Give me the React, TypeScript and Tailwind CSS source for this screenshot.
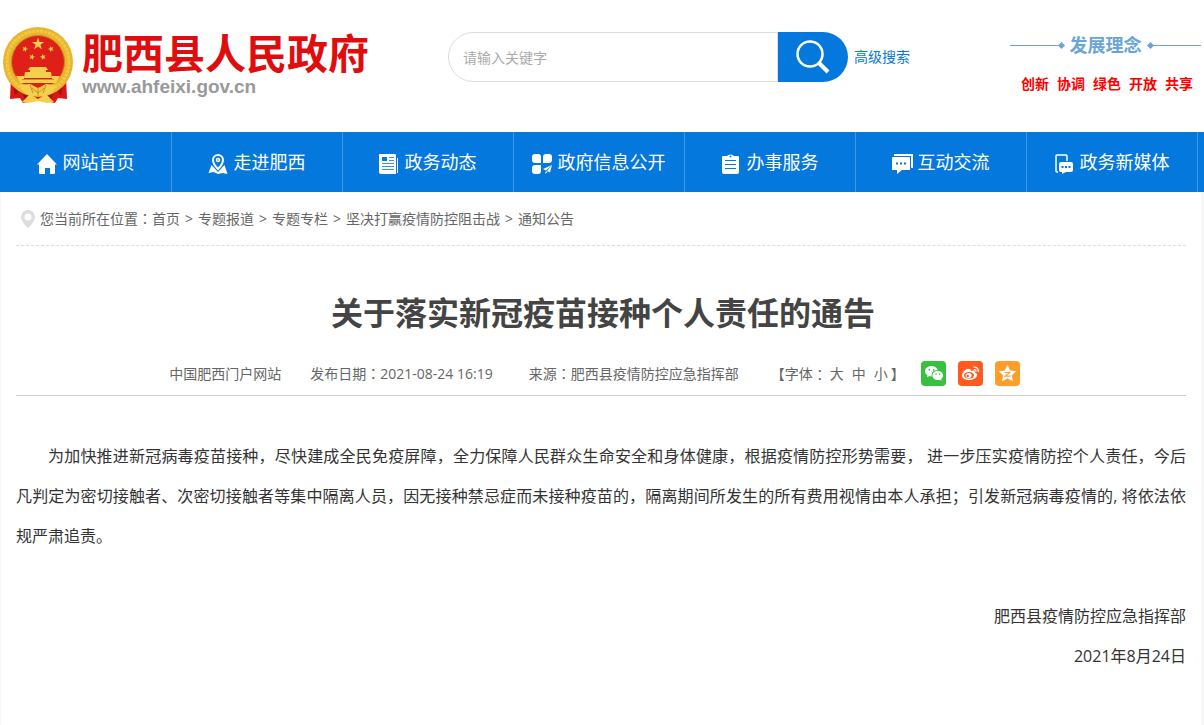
import type { ReactNode } from 'react'

const navItems: { label: string; icon: ReactNode }[] = [
  {
    label: '网站首页',
    icon: <path d="M10 0 20 10.500h-2V19a1 1 0 0 1-1 1h-4v-6H8v6H3a1 1 0 0 1-1-1v-8.500H0z" fill="currentColor" />
  },
  {
    label: '走进肥西',
    icon: (
      <>
        <path
          d="M10 1a5 5 0 0 0-5 5c0 4 5 9 5 9s5-5 5-9a5 5 0 0 0-5-5z"
          fill="none"
          stroke="currentColor"
          strokeWidth="2"
        />
        <circle cx="10" cy="6" r="1.500" fill="none" stroke="currentColor" strokeWidth="1.500" />
        <path d="M3.500 11 .5 19l5-1 4.500 2 4.500-1 5 1-3-9-6.500 7z" fill="currentColor" />
      </>
    )
  },
  {
    label: '政务动态',
    icon: (
      <>
        <path d="M1 0h15a1 1 0 0 1 1 1v19H2a2 2 0 0 1-2-2V1a1 1 0 0 1 1-1z" fill="currentColor" />
        <path d="M18 4h1v15h-1z" fill="currentColor" />
        <path d="M3 3h5v4H3z" fill="#0478dc" />
        <path d="M10 3.500h5M10 6.500h5M3 9.500h12M3 12.500h12M3 15.500h12" stroke="#0478dc" strokeWidth=".8" />
      </>
    )
  },
  {
    label: '政府信息公开',
    icon: (
      <>
        <path
          d="M3 0h3a3 3 0 0 1 3 3v6H3a3 3 0 0 1-3-3V3a3 3 0 0 1 3-3zM14 0h3a3 3 0 0 1 3 3v3a3 3 0 0 1-3 3h-6V3a3 3 0 0 1 3-3zM3 11h6v6a3 3 0 0 1-3 3H3a3 3 0 0 1-3-3v-3a3 3 0 0 1 3-3z"
          fill="currentColor"
        />
        <path d="M20 11l-9 4 3 1.500zM20 11l-5 6 3 1.500zM14 17l-1 3 2.500-2z" fill="currentColor" />
      </>
    )
  },
  {
    label: '办事服务',
    icon: (
      <>
        <path
          d="M2 2h4a4 3 0 0 1 7 0h4a1 1 0 0 1 1 1v15a2 2 0 0 1-2 2H3a2 2 0 0 1-2-2V3a1 1 0 0 1 1-1z"
          fill="currentColor"
        />
        <circle cx="9.500" cy="2.500" r="1" fill="#0478dc" />
        <path d="M4 6.500h11M4 10.500h11M4 14.500h11" stroke="#0478dc" />
      </>
    )
  },
  {
    label: '互动交流',
    icon: (
      <>
        <path d="M2 1h18v13" fill="none" stroke="currentColor" strokeWidth="2" />
        <path d="M1 3h16a1 1 0 0 1 1 1v12h-8l-5 4v-4H0V4a1 1 0 0 1 1-1z" fill="currentColor" />
        <path d="M4 8.500h2v2H4zM8 8.500h2v2H8zM12 8.500h2v2h-2z" fill="#0478dc" />
      </>
    )
  },
  {
    label: '政务新媒体',
    icon: (
      <>
        <path
          d="M4 18H3a1 1 0 0 1-1-1V2a1 1 0 0 1 1-1h9a1 1 0 0 1 1 1v5"
          fill="none"
          stroke="currentColor"
          strokeWidth="1.500"
        />
        <path
          d="M7 8h10a2 2 0 0 1 2 2v6a2 2 0 0 1-2 2h-5l-4 2v-2H7a2 2 0 0 1-2-2v-6a2 2 0 0 1 2-2z"
          fill="currentColor"
        />
        <path d="M7.500 12h2v2h-2zM11 12h2v2h-2zM14.500 12h2v2h-2z" fill="#0478dc" />
      </>
    )
  }
]

const crumbs = ['首页', '专题报道', '专题专栏', '坚决打赢疫情防控阻击战', '通知公告']

const ideas = ['创新', '协调', '绿色', '开放', '共享']

const star = 'M0-10 2.400-3.200 9.500-3.100 3.800 1.200 5.900 8.100 0 4-5.900 8.100-3.800 1.200-9.500-3.100-2.400-3.200z'

// Full-width colon set in the middle of its cell
function Colon() {
  return <span className="font-['Noto_Sans_CJK_TC',sans-serif] leading-none">：</span>
}

function Emblem() {
  return (
    <svg viewBox="0 0 72 78" className="h-[78px] w-[72px] shrink-0" aria-hidden="true">
      <path d="m9 50-1 22 10-1 3 5 10-2h12l10 2 3-5 9 1-1-22z" fill="#d81718" />
      <path d="m11 58 8 4-6 6zM61 58l-8 4 6 6zM20 63l6 6-3 6zM52 63l-6 6 3 6z" fill="#a80e12" />
      <circle cx="36" cy="35" r="35" fill="#e9b52f" />
      <circle cx="36" cy="35" r="31" fill="none" stroke="#f2c945" strokeWidth="3" strokeDasharray="3 1" />
      <circle cx="36" cy="35" r="26.500" fill="#df2019" stroke="#c58b1b" />
      <g fill="#f5ce4b">
        <path d={star} transform="translate(36 17) scale(.65)" />
        <path d={star} transform="translate(23 22) rotate(20) scale(.32)" />
        <path d={star} transform="translate(49 22) rotate(-20) scale(.32)" />
        <path d={star} transform="translate(30 30) rotate(15) scale(.32)" />
        <path d={star} transform="translate(41 30) rotate(-15) scale(.32)" />
        <path d="M28 40h16l2 3h-2v2h5l1 6H22l1-6h5v-2h-2zM14 49h8v3h28v-3h8l-4 7H18z" />
        <path d="m17 58 11-1 8 4 8-4 11 1-5 8-7 3h-14l-7-3z" />
        <path d="m20 75 8-8 8 5 8-5 8 8-7 1-9-2-9 2z" />
      </g>
      <path d="M20 52.500h32M30 61l6 5 6-5M36 61v8M28 58l3 8M44 58l-3 8" stroke="#c8921f" fill="none" />
    </svg>
  )
}

function ShareLinks() {
  return (
    <div className="flex gap-3">
      <a href="#wechat" aria-label="微信" className="block size-[25px] rounded-[4px] bg-[#38c13f]">
        <svg viewBox="0 0 25 25" className="size-full">
          <path
            d="M10.500 5C6.900 5 4 7.300 4 10.200c0 1.700 1 3.100 2.500 4.100L6 16.300l2.300-1.200c.8.200 1.500.3 2.400.3-.8-3.700 2.200-6.500 6.100-6.400C16.100 6.700 13.600 5 10.500 5z"
            fill="#fff"
          />
          <path
            d="M16.800 10c-3.100 0-5.400 2-5.400 4.500s2.300 4.500 5.400 4.500c.6 0 1.200-.1 1.800-.3l2 1-.5-1.700c1.200-.8 2-2.100 2-3.500 0-2.500-2.300-4.500-5.300-4.500z"
            fill="#fff"
          />
          <g fill="#38c13f">
            <circle cx="8.300" cy="8.800" r=".9" />
            <circle cx="12.700" cy="8.800" r=".9" />
            <circle cx="15" cy="13.300" r=".8" />
            <circle cx="18.600" cy="13.300" r=".8" />
          </g>
        </svg>
      </a>
      <a href="#weibo" aria-label="新浪微博" className="block size-[25px] rounded-[4px] bg-[#ff5a1f]">
        <svg viewBox="0 0 25 25" className="size-full" fill="none">
          <path
            d="M11 8c-2-1.500-7 3-7 6.500C4 17.500 7.500 19 11 19c4.500 0 8-2.300 8-5 0-1.500-1-2.300-2.300-2.600.5-2-.7-2.600-3.900-1.400.4-1.200 0-2-1.800-2z"
            fill="#fff"
          />
          <ellipse cx="11" cy="14.300" rx="5" ry="3.300" fill="#ff5a1f" />
          <ellipse cx="10.600" cy="14.600" rx="3" ry="2.500" fill="#fff" />
          <circle cx="9.800" cy="15" r="1.200" fill="#ff5a1f" />
          <path d="M15.500 6.200c3-.7 5.500 1.800 4.700 4.800M15.800 8.700c1.500-.4 2.400.6 2.100 1.900" stroke="#fff" strokeWidth="1.300" />
        </svg>
      </a>
      <a href="#qzone" aria-label="QQ空间" className="block size-[25px] rounded-[4px] bg-[#ff9d2b]">
        <svg viewBox="0 0 25 25" className="size-full">
          <path
            d="m12.500 4 2.700 5.400 6 .8-4.400 4.100 1.100 5.900-5.400-2.800-5.400 2.800 1.100-5.900-4.400-4.100 6-.8z"
            fill="#fff"
          />
          <path d="M9.800 11.500h5l-4.600 3.600h5.300" fill="none" stroke="#ff9d2b" strokeWidth="1.100" />
        </svg>
      </a>
    </div>
  )
}

function IdeaLine({ flip }: { flip?: boolean }) {
  return (
    <span className={flip ? 'flex flex-1 flex-row-reverse items-center' : 'flex flex-1 items-center'}>
      <span className="h-px flex-1 bg-[#6ba5d7]" />
      <span className="size-[5px] rotate-45 bg-[#6ba5d7]" />
    </span>
  )
}

export default function App() {
  return (
    <div className="min-h-screen bg-[#f8f8f8] font-['Open_Sans','Noto_Sans_CJK_SC',sans-serif] text-sm text-[#666]">
      <header className="flex h-[132px] items-start bg-white pl-[2px] pr-[3px]">
        <a href="#home" className="flex pt-[27px]">
          <Emblem />
          <span className="flex flex-col pl-2 pt-[2px]">
            <span className="font-['Noto_Sans_CJK_SC',sans-serif] text-[41px] font-bold leading-[44px] text-[#df0d0d]">
              肥西县人民政府
            </span>
            <span className="mt-1 font-['Liberation_Sans',sans-serif] text-[19px] font-bold leading-5 text-[#999]">
              www.ahfeixi.gov.cn
            </span>
          </span>
        </a>

        <form className="ml-auto flex items-center pr-5 pt-8">
          <input
            type="text"
            aria-label="搜索"
            placeholder="请输入关键字"
            className="h-[50px] w-[330px] rounded-l-full border border-[#ddd] bg-white px-[14px] placeholder:text-[#aaa]"
          />
          <button
            type="button"
            aria-label="搜索"
            className="flex h-[50px] w-[70px] items-center justify-center rounded-r-full bg-[#0478dc]"
          >
            <svg viewBox="0 0 36 36" className="size-9" fill="none" stroke="#fff">
              <circle cx="15" cy="15" r="12.500" strokeWidth="2.500" />
              <path d="m24 24 9 9" strokeWidth="4" />
            </svg>
          </button>
          <a href="#advanced" className="pl-[6px] text-[#0478dc]">
            高级搜索
          </a>
        </form>

        <div className="ml-20 w-[191px] pt-8">
          <div className="flex items-center gap-[6px] text-lg font-bold leading-[26px] text-[#6ba5d7]">
            <IdeaLine />
            发展理念
            <IdeaLine flip />
          </div>
          <div className="flex justify-end gap-2 pr-2 pt-4 font-bold text-[#f00]">
            {ideas.map((idea) => (
              <span key={idea}>{idea}</span>
            ))}
          </div>
        </div>
      </header>

      <nav className="bg-[#0478dc] pl-px pr-[6px]">
        <ul className="grid grid-cols-7">
          {navItems.map((item) => (
            <li key={item.label} className="border-r border-[#3f98e5]">
              <a href="#nav" className="flex h-[60px] items-center justify-center gap-[5px] pr-px text-lg text-white">
                <svg viewBox="0 0 21 20" className="mt-1 h-5 w-[21px] shrink-0">
                  {item.icon}
                </svg>
                {item.label}
              </a>
            </li>
          ))}
        </ul>
      </nav>

      <main className="ml-px mr-[3px] min-h-[533px] bg-white px-[15px]">
        <div className="flex h-[54px] items-center border-b border-dashed border-[#ddd] pl-[5px]">
          <svg viewBox="0 0 14 18" className="mr-[5px] h-[18px] w-[14px]">
            <path d="M7 0a7 7 0 0 0-7 7c0 5 7 11 7 11s7-6 7-11a7 7 0 0 0-7-7zm0 3.500a3.500 3.500 0 1 1 0 7 3.500 3.500 0 0 1 0-7z" fill="#ddd" />
          </svg>
          <span>
            您当前所在位置
            <Colon />
          </span>
          {crumbs.map((crumb, i) => (
            <span key={crumb}>
              {i > 0 && <span className="px-[5px]">&gt;</span>}
              <a href="#crumb">{crumb}</a>
            </span>
          ))}
        </div>

        <article>
          <h1 className="pl-1 pt-[42px] text-center text-[32px] font-bold leading-[50px] text-[#444]">
            关于落实新冠疫苗接种个人责任的通告
          </h1>

          <div className="mt-2 flex h-[50px] items-center justify-center border-b border-[#ccc] pr-[13px] pt-[6px]">
            <span className="mr-[29px]">中国肥西门户网站</span>
            <span className="mr-9">
              发布日期
              <Colon />
              2021-08-24 16:19
            </span>
            <span className="mr-8">
              来源
              <Colon />
              肥西县疫情防控应急指挥部
            </span>
            <span className="mr-4 flex items-center">
              【字体
              <Colon />
              <span className="flex gap-2 px-[3px]">
                <button type="button">大</button>
                <button type="button">中</button>
                <button type="button">小</button>
              </span>
              】
            </span>
            <ShareLinks />
          </div>

          <div className="pt-10 text-base leading-10 text-[#333]">
            <p className="text-justify indent-8">
              为加快推进新冠病毒疫苗接种，尽快建成全民免疫屏障，全力保障人民群众生命安全和身体健康，根据疫情防控形势需要， 进一步压实疫情防控个人责任，今后凡判定为密切接触者、次密切接触者等集中隔离人员，因无接种禁忌症而未接种疫苗的，隔离期间所发生的所有费用视情由本人承担；引发新冠病毒疫情的, 将依法依规严肃追责。
            </p>
            <div className="pt-10 text-right">
              <p>肥西县疫情防控应急指挥部</p>
              <p>2021年8月24日</p>
            </div>
          </div>
        </article>
      </main>
    </div>
  )
}
